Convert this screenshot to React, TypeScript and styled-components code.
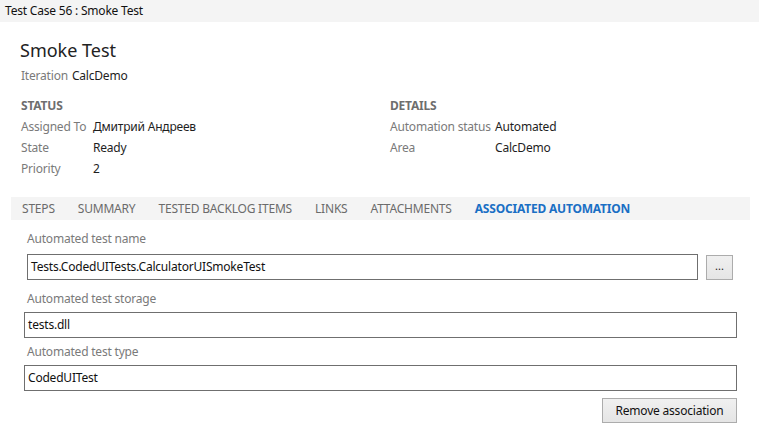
import * as React from 'react';
import styled, { createGlobalStyle } from 'styled-components';

const GlobalStyle = createGlobalStyle`
  html, body {
    margin: 0;
    padding: 0;
    background: #ffffff;
  }
  body {
    font-family: "Noto Sans", "Open Sans", sans-serif;
    font-size: 12px;
    color: #1e1e1e;
  }
`;

const Page = styled.div`
  width: 759px;
  height: 435px;
  overflow: hidden;
  background: #ffffff;
`;

const TitleBar = styled.div`
  height: 22px;
  line-height: 22px;
  padding-left: 5px;
  background: #f4f4f4;
  font-size: 12px;
  color: #111;
  letter-spacing: -0.2px;
`;

const Header = styled.div`
  padding: 16px 0 0 20px;
`;

const Title = styled.h1`
  margin: 0;
  font-size: 18px;
  font-weight: 400;
  color: #222;
  line-height: 24px;
`;

const IterationRow = styled.div`
  display: flex;
  gap: 4px;
  margin-top: 5px;
  padding-left: 1px;
  line-height: 18px;
`;

const Label = styled.span`
  color: #7a7a7a;
  letter-spacing: -0.2px;
`;

const Value = styled.span`
  color: #1e1e1e;
  letter-spacing: -0.2px;
`;

const Sections = styled.div`
  display: flex;
  margin-top: 10px;
  padding-left: 1px;
`;

const Section = styled.div<{ $width: number; $labelWidth: number }>`
  width: ${p => p.$width}px;
  display: grid;
  grid-template-columns: ${p => p.$labelWidth}px 1fr;
  grid-auto-rows: 21px;
  align-items: center;
`;

const SectionTitle = styled.div`
  grid-column: 1 / span 2;
  font-weight: 700;
  color: #6e6e6e;
  letter-spacing: -0.2px;
`;

const TabBar = styled.div`
  display: flex;
  margin: 18px 9px 0 11px;
  height: 23px;
  align-items: center;
  background: #f4f4f4;
  padding-left: 11px;
  gap: 23px;
`;

const Tab = styled.div<{ $active?: boolean }>`
  font-size: 12px;
  color: ${p => (p.$active ? '#1a6fc4' : '#6b6b6b')};
  font-weight: ${p => (p.$active ? 700 : 400)};
  letter-spacing: -0.2px;
`;

const Form = styled.div`
  padding: 10px 22px 0 24px;
  display: flex;
  flex-direction: column;
`;

const FieldLabel = styled.div<{ $space: number }>`
  color: #7a7a7a;
  line-height: 18px;
  padding-left: 3px;
  margin-top: ${p => p.$space}px;
  letter-spacing: -0.2px;
`;

const FieldRow = styled.div`
  display: flex;
  gap: 8px;
  margin: 6px 0 0 3px;
  padding-right: 4px;
`;

const Input = styled.div<{ $inRow?: boolean }>`
  flex: 1;
  height: 24px;
  line-height: 24px;
  border: 1px solid #6f6f6f;
  padding-left: 3px;
  color: #111;
  letter-spacing: -0.2px;
  margin-top: ${p => (p.$inRow ? 0 : 4)}px;
`;

const BrowseButton = styled.button`
  width: 27px;
  height: 25px;
  margin-top: 1px;
  border: 1px solid #acacac;
  background: linear-gradient(#f0f0f0, #e5e5e5);
  font-size: 11px;
  color: #222;
  padding: 0 0 4px 0;
  font-family: inherit;
`;

const Footer = styled.div`
  display: flex;
  justify-content: flex-end;
  margin-top: 7px;
`;

const PushButton = styled.button`
  width: 135px;
  height: 25px;
  border: 1px solid #acacac;
  background: linear-gradient(#f0f0f0, #e5e5e5);
  font-family: inherit;
  font-size: 12px;
  color: #111;
  letter-spacing: -0.2px;
  padding: 0;
`;

const tabs = ['STEPS', 'SUMMARY', 'TESTED BACKLOG ITEMS', 'LINKS', 'ATTACHMENTS', 'ASSOCIATED AUTOMATION'];

const App: React.FunctionComponent = () => {
  return (
    <Page>
      <GlobalStyle />
      <TitleBar>Test Case 56 : Smoke Test</TitleBar>
      <Header>
        <Title>Smoke Test</Title>
        <IterationRow>
          <Label>Iteration</Label>
          <Value>CalcDemo</Value>
        </IterationRow>
        <Sections>
          <Section $width={369} $labelWidth={72}>
            <SectionTitle>STATUS</SectionTitle>
            <Label>Assigned To</Label>
            <Value>Дмитрий Андреев</Value>
            <Label>State</Label>
            <Value>Ready</Value>
            <Label>Priority</Label>
            <Value>2</Value>
          </Section>
          <Section $width={300} $labelWidth={105}>
            <SectionTitle>DETAILS</SectionTitle>
            <Label>Automation status</Label>
            <Value>Automated</Value>
            <Label>Area</Label>
            <Value>CalcDemo</Value>
          </Section>
        </Sections>
      </Header>
      <TabBar>
        {tabs.map(t => (
          <Tab key={t} $active={t === 'ASSOCIATED AUTOMATION'}>{t}</Tab>
        ))}
      </TabBar>
      <Form>
        <FieldLabel $space={0}>Automated test name</FieldLabel>
        <FieldRow>
          <Input $inRow>Tests.CodedUITests.CalculatorUISmokeTest</Input>
          <BrowseButton>...</BrowseButton>
        </FieldRow>
        <FieldLabel $space={10}>Automated test storage</FieldLabel>
        <Input>tests.dll</Input>
        <FieldLabel $space={5}>Automated test type</FieldLabel>
        <Input>CodedUITest</Input>
        <Footer>
          <PushButton>Remove association</PushButton>
        </Footer>
      </Form>
    </Page>
  );
};

export default App;
